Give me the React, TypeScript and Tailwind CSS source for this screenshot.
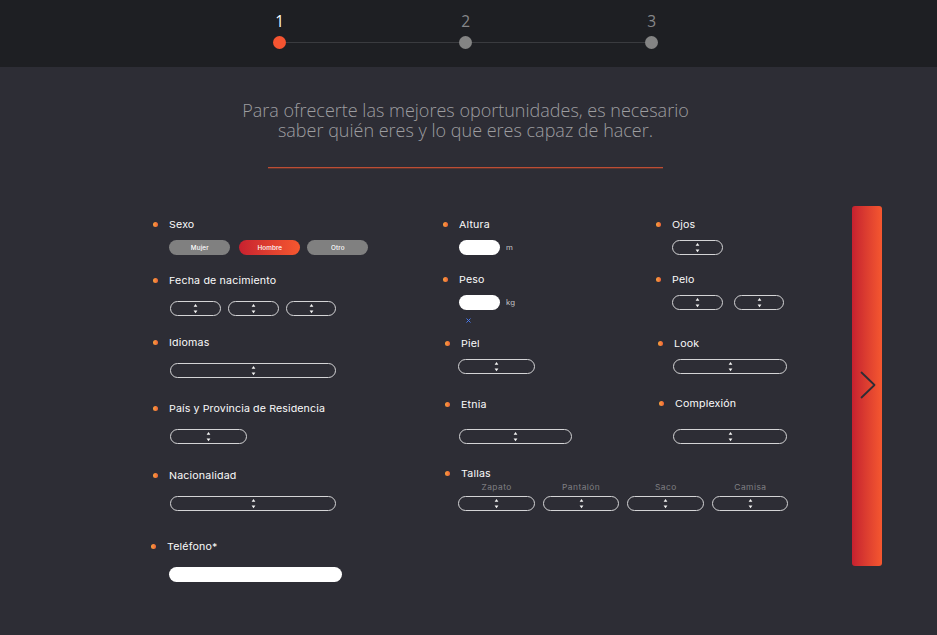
import type { ReactNode } from 'react';

const steps = [
  { n: 1, active: true },
  { n: 2, active: false },
  { n: 3, active: false },
];

function Select({ className }: { className: string }) {
  return (
    <div className={`flex h-[15px] shrink-0 items-center justify-center rounded-full border border-[#d4d4d6] ${className}`}>
      <svg width="5" height="11" viewBox="0 0 5 11" fill="#f4f4f4">
        <path d="M2.5 1 4.4 3.7H.6Z" />
        <path d="M2.5 10.2 4.4 7.5H.6Z" />
      </svg>
    </div>
  );
}

function Field({ label, tracking = 'tracking-[0.15px]', className, gap, children }: {
  label: string;
  tracking?: string;
  className: string;
  gap: string;
  children: ReactNode;
}) {
  return (
    <div className={`flex shrink-0 flex-col ${className}`}>
      <div className="flex h-3.5 items-center gap-[11px]">
        <span className="mb-px size-[5px] shrink-0 rounded-full bg-linear-to-r from-[#f9a13c] to-[#ee6238]" />
        <span className={`origin-left scale-x-[1.12] whitespace-nowrap text-[9.5px] leading-3 text-[#fafafa] ${tracking}`}>{label}</span>
      </div>
      <div className={`flex ${gap}`}>{children}</div>
    </div>
  );
}

function Choice({ text, active = false, className = '' }: { text: string; active?: boolean; className?: string }) {
  return (
    <button
      className={`flex h-[15px] w-[61px] items-center justify-center rounded-full text-white ${
        active ? 'bg-linear-to-r from-[#c8202f] to-[#f5572f]' : 'bg-[#808080]'
      } ${className}`}
    >
      <span className="scale-x-[1.15] pt-0.5 text-[5.5px] font-medium leading-[15px] tracking-[0.1px]">{text}</span>
    </button>
  );
}

function Unit({ text }: { text: string }) {
  return <span className="origin-left scale-x-[1.12] text-[7px] leading-4 text-[#c4c4c6]">{text}</span>;
}

function Size({ text, className = 'w-[77px]' }: { text: string; className?: string }) {
  return (
    <div className="flex flex-col items-center">
      <span className="h-[15px] scale-x-[1.12] pl-px text-[7.5px] leading-[14px] tracking-[0.4px] text-[#808084]">{text}</span>
      <Select className={className} />
    </div>
  );
}

export default function App() {
  return (
    <div className="flex h-[635px] w-[937px] flex-col overflow-hidden bg-[#2d2d35] font-['Inter',sans-serif]">
      <header className="flex h-[67px] shrink-0 justify-center bg-[#1e1f23] pr-[5.4px] font-['Open_Sans',sans-serif]">
        {steps.map((s, i) => (
          <div key={s.n} className="flex">
            {i > 0 && <div className="mt-[42px] h-px w-[173px] bg-[#3a3b3f]" />}
            <div className="flex w-[13px] flex-col items-center">
              <span className={`mt-2.5 h-[26px] text-[15.5px] leading-[22px] ${s.active ? 'text-white' : 'text-[#87878a]'}`}>{s.n}</span>
              <span className={`size-[13px] rounded-full ${s.active ? 'bg-[#f55431]' : 'bg-[#848484]'}`} />
            </div>
          </div>
        ))}
      </header>

      <section className="flex h-[151px] shrink-0 flex-col items-center pr-[6px] pt-[33px]">
        <h1 className="whitespace-nowrap text-center font-['Open_Sans',sans-serif] text-[18px] font-light leading-5 text-[#9d9da0]">
          Para ofrecerte las mejores oportunidades, es necesario
          <br />
          saber quién eres y lo que eres capaz de hacer.
        </h1>
        <div className="mt-[27px] h-0.5 w-[395px] border-t border-[#bd4d34] bg-[#5c352f]" />
      </section>

      <main className="flex items-start">
        <div className="ml-[153px] flex w-[290px] flex-col">
          <Field label="Sexo" className="h-14" gap="mt-2 ml-4">
            <Choice text="Mujer" className="mr-[9px]" />
            <Choice text="Hombre" active className="mr-[7px]" />
            <Choice text="Otro" />
          </Field>
          <Field label="Fecha de nacimiento" className="h-[62px]" gap="mt-[13px] ml-[17px] gap-[7px]">
            <Select className="w-[51px]" />
            <Select className="w-[51px]" />
            <Select className="w-[50px]" />
          </Field>
          <Field label="Idiomas" className="h-[66px]" gap="mt-[13px] ml-[17px]">
            <Select className="w-[166px]" />
          </Field>
          <Field label="País y Provincia de Residencia" tracking="tracking-[0.1px]" className="h-[67px]" gap="mt-[13px] ml-[17px]">
            <Select className="w-[77px]" />
          </Field>
          <Field label="Nacionalidad" className="h-[71px]" gap="mt-[13px] ml-[17px]">
            <Select className="w-[166px]" />
          </Field>
          <Field label="Teléfono*" className="-ml-0.5" gap="mt-[13px] ml-[18px]">
            <input className="h-[15px] w-[173px] rounded-full bg-white" />
          </Field>
        </div>

        <div className="flex w-[409px] flex-col">
          <div className="flex h-[249px]">
            <div className="flex w-[213px] flex-col">
              <Field label="Altura" className="h-[55px]" gap="mt-2 ml-4 gap-[6px]">
                <input className="h-[15px] w-[41px] rounded-full bg-white" />
                <Unit text="m" />
              </Field>
              <Field label="Peso" className="h-[41px]" gap="mt-2 ml-4 gap-[6px]">
                <input className="h-[15px] w-[41px] rounded-full bg-white" />
                <Unit text="kg" />
              </Field>
              <svg className="ml-[23px] mt-1 mb-[14px] shrink-0" width="5" height="5" viewBox="0 0 5 5" stroke="#4a7bf0" strokeWidth="1">
                <path d="M.5 .5 4.5 4.5M4.5 .5 .5 4.5" />
              </svg>
              <Field label="Piel" className="ml-0.5 h-[61px]" gap="mt-2 ml-[13px]">
                <Select className="w-[77px]" />
              </Field>
              <Field label="Etnia" className="ml-0.5" gap="mt-[17px] ml-[14px]">
                <Select className="w-[113px]" />
              </Field>
            </div>
            <div className="flex flex-col">
              <Field label="Ojos" className="h-[55px]" gap="mt-2 ml-4">
                <Select className="w-[51px]" />
              </Field>
              <Field label="Pelo" className="h-16" gap="mt-2 ml-4 gap-[11px]">
                <Select className="w-[51px]" />
                <Select className="w-[50px]" />
              </Field>
              <Field label="Look" className="ml-0.5 h-[60px]" gap="mt-2 ml-[15px]">
                <Select className="w-[114px]" />
              </Field>
              <Field label="Complexión" className="ml-[3px]" gap="mt-[18px] ml-[14px]">
                <Select className="w-[114px]" />
              </Field>
            </div>
          </div>
          <Field label="Tallas" className="ml-0.5" gap="ml-[13px] gap-2">
            <Size text="Zapato" />
            <Size text="Pantalón" className="w-[76px]" />
            <Size text="Saco" />
            <Size text="Camisa" className="w-[76px]" />
          </Field>
        </div>

        <button className="-mt-3 flex h-[360px] w-[30px] items-center justify-center rounded-[3px] bg-linear-to-r from-[#c5202f] to-[#f5572f]">
          <svg className="mb-0.5 ml-[2px]" width="16" height="28" viewBox="0 0 16 28" fill="none" stroke="#2d2d35" strokeWidth="1.8" strokeLinecap="round" strokeLinejoin="round">
            <path d="M1.5 1.5 14.5 14 1.5 26.5" />
          </svg>
        </button>
      </main>
    </div>
  );
}
